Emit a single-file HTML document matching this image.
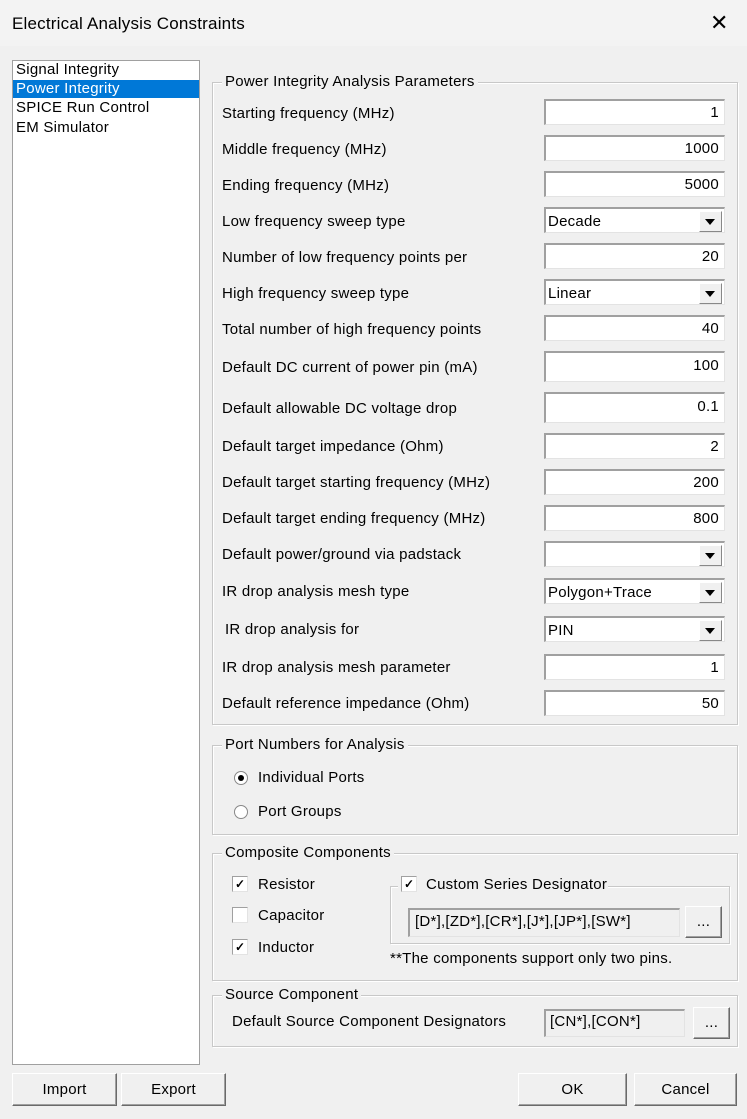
<!DOCTYPE html>
<html><head><meta charset="utf-8"><style>
body{margin:0;width:747px;height:1119px;background:#f0f0f0;font-family:"Liberation Sans",Tahoma,sans-serif;font-size:15px;letter-spacing:0.25px;color:#000;position:relative;overflow:hidden}
.a{position:absolute}
.t{position:absolute;white-space:nowrap;line-height:16px}
.g{position:absolute;border:1px solid #c8c8c8;box-shadow:inset 1px 1px 0 #fff,1px 1px 0 #fff}
.gl{position:absolute;background:#f0f0f0;padding:0 3px;top:-9px;left:9px;line-height:16px;white-space:nowrap}
.in{position:absolute;left:544px;width:178px;height:23px;background:#fff;border-top:2px solid #a0a0a0;border-left:2px solid #a0a0a0;border-right:1px solid #e3e3e3;border-bottom:1px solid #e3e3e3;text-align:right;line-height:23px;box-sizing:content-box}
.in span{padding-right:5px}
.dd{text-align:left}
.dd span{padding-left:2px;position:relative;top:1px}
.arr{position:absolute;right:2px;top:2px;width:21px;height:19px;background:#f0f0f0;border:1px solid #fff;border-right-color:#888;border-bottom-color:#888}
.arr:after{content:"";position:absolute;left:5px;top:7px;border-left:5px solid transparent;border-right:5px solid transparent;border-top:6px solid #000}
.btn{position:absolute;height:31px;background:#f0f0f0;border:1px solid #fff;border-right-color:#6a6a6a;border-bottom-color:#6a6a6a;box-shadow:inset -1px -1px 0 #a0a0a0;text-align:center;line-height:31px}
.cb{position:absolute;width:14px;height:14px;background:#fff;border-top:1px solid #a0a0a0;border-left:1px solid #a0a0a0;border-right:1px solid #e3e3e3;border-bottom:1px solid #e3e3e3;font-size:12px;line-height:14px;text-align:center;font-weight:bold;letter-spacing:0}
</style></head><body>
<div class="a" style="left:0;top:0;width:747px;height:46px;background:#f3f3f3"></div>
<div class="t" style="left:12px;top:14px;font-size:17px;line-height:20px;letter-spacing:0.2px">Electrical Analysis Constraints</div>
<div class="t" style="left:710px;top:11px;font-size:22px;line-height:24px">✕</div>

<div class="a" style="left:12px;top:60px;width:186px;height:1003px;background:#fff;border:1px solid #a0a0a0"></div>
<div class="t" style="left:16px;top:62px">Signal Integrity</div>
<div class="a" style="left:13px;top:80px;width:186px;height:18px;background:#0078d7"></div>
<div class="t" style="left:16px;top:81px;color:#fff">Power Integrity</div>
<div class="t" style="left:16px;top:100px">SPICE Run Control</div>
<div class="t" style="left:16px;top:120px">EM Simulator</div>

<div class="g" style="left:212px;top:82px;width:524px;height:641px"><div class="gl">Power Integrity Analysis Parameters</div></div>

<div class="t" style="left:222px;top:106px">Starting frequency (MHz)</div><div class="in" style="top:99px"><span>1</span></div>
<div class="t" style="left:222px;top:142px">Middle frequency (MHz)</div><div class="in" style="top:135px"><span>1000</span></div>
<div class="t" style="left:222px;top:178px">Ending frequency (MHz)</div><div class="in" style="top:171px"><span>5000</span></div>
<div class="t" style="left:222px;top:214px">Low frequency sweep type</div><div class="in dd" style="top:207px"><span>Decade</span><div class="arr"></div></div>
<div class="t" style="left:222px;top:250px">Number of low frequency points per</div><div class="in" style="top:243px"><span>20</span></div>
<div class="t" style="left:222px;top:286px">High frequency sweep type</div><div class="in dd" style="top:279px"><span>Linear</span><div class="arr"></div></div>
<div class="t" style="left:222px;top:322px">Total number of high frequency points</div><div class="in" style="top:315px"><span>40</span></div>
<div class="t" style="left:222px;top:360px">Default DC current of power pin (mA)</div><div class="in" style="top:351px;height:28px;line-height:26px"><span>100</span></div>
<div class="t" style="left:222px;top:401px">Default allowable DC voltage drop</div><div class="in" style="top:392px;height:28px;line-height:26px"><span>0.1</span></div>
<div class="t" style="left:222px;top:439px">Default target impedance (Ohm)</div><div class="in" style="top:433px"><span>2</span></div>
<div class="t" style="left:222px;top:475px">Default target starting frequency (MHz)</div><div class="in" style="top:469px"><span>200</span></div>
<div class="t" style="left:222px;top:511px">Default target ending frequency (MHz)</div><div class="in" style="top:505px"><span>800</span></div>
<div class="t" style="left:222px;top:547px">Default power/ground via padstack</div><div class="in dd" style="top:541px"><span></span><div class="arr"></div></div>
<div class="t" style="left:222px;top:584px">IR drop analysis mesh type</div><div class="in dd" style="top:578px"><span>Polygon+Trace</span><div class="arr"></div></div>
<div class="t" style="left:225px;top:622px">IR drop analysis for</div><div class="in dd" style="top:616px"><span>PIN</span><div class="arr"></div></div>
<div class="t" style="left:222px;top:660px">IR drop analysis mesh parameter</div><div class="in" style="top:654px"><span>1</span></div>
<div class="t" style="left:222px;top:696px">Default reference impedance (Ohm)</div><div class="in" style="top:690px"><span>50</span></div>

<div class="g" style="left:212px;top:745px;width:524px;height:88px"><div class="gl">Port Numbers for Analysis</div></div>
<div class="a" style="left:234px;top:771px;width:12px;height:12px;border-radius:50%;background:#fff;border:1px solid #888"></div>
<div class="a" style="left:238px;top:775px;width:6px;height:6px;border-radius:50%;background:#000"></div>
<div class="t" style="left:258px;top:770px">Individual Ports</div>
<div class="a" style="left:234px;top:805px;width:12px;height:12px;border-radius:50%;background:#fff;border:1px solid #888"></div>
<div class="t" style="left:258px;top:804px">Port Groups</div>

<div class="g" style="left:212px;top:853px;width:524px;height:126px"><div class="gl">Composite Components</div></div>
<div class="cb" style="left:232px;top:876px">✓</div><div class="t" style="left:258px;top:877px">Resistor</div>
<div class="cb" style="left:232px;top:907px"></div><div class="t" style="left:258px;top:908px">Capacitor</div>
<div class="cb" style="left:232px;top:939px">✓</div><div class="t" style="left:258px;top:940px">Inductor</div>
<div class="g" style="left:390px;top:886px;width:338px;height:56px"></div>
<div class="a" style="left:398px;top:875px;width:210px;height:20px;background:#f0f0f0"></div>
<div class="cb" style="left:401px;top:876px">✓</div><div class="t" style="left:426px;top:877px">Custom Series Designator</div>
<div class="a" style="left:408px;top:908px;width:269px;height:26px;background:#f0f0f0;border-top:2px solid #a0a0a0;border-left:2px solid #a0a0a0;border-right:1px solid #e3e3e3;border-bottom:1px solid #e3e3e3"></div>
<div class="t" style="left:415px;top:914px">[D*],[ZD*],[CR*],[J*],[JP*],[SW*]</div>
<div class="btn" style="left:685px;top:906px;width:35px;height:30px;line-height:30px">...</div>
<div class="t" style="left:390px;top:951px">**The components support only two pins.</div>

<div class="g" style="left:212px;top:995px;width:524px;height:50px"><div class="gl">Source Component</div></div>
<div class="t" style="left:232px;top:1014px">Default Source Component Designators</div>
<div class="a" style="left:544px;top:1009px;width:138px;height:25px;background:#f0f0f0;border-top:2px solid #a0a0a0;border-left:2px solid #a0a0a0;border-right:1px solid #e3e3e3;border-bottom:1px solid #e3e3e3"></div>
<div class="t" style="left:550px;top:1014px">[CN*],[CON*]</div>
<div class="btn" style="left:693px;top:1007px;width:35px;height:30px;line-height:30px">...</div>

<div class="btn" style="left:12px;top:1073px;width:103px">Import</div>
<div class="btn" style="left:121px;top:1073px;width:103px">Export</div>
<div class="btn" style="left:518px;top:1073px;width:107px">OK</div>
<div class="btn" style="left:634px;top:1073px;width:101px">Cancel</div>
</body></html>
